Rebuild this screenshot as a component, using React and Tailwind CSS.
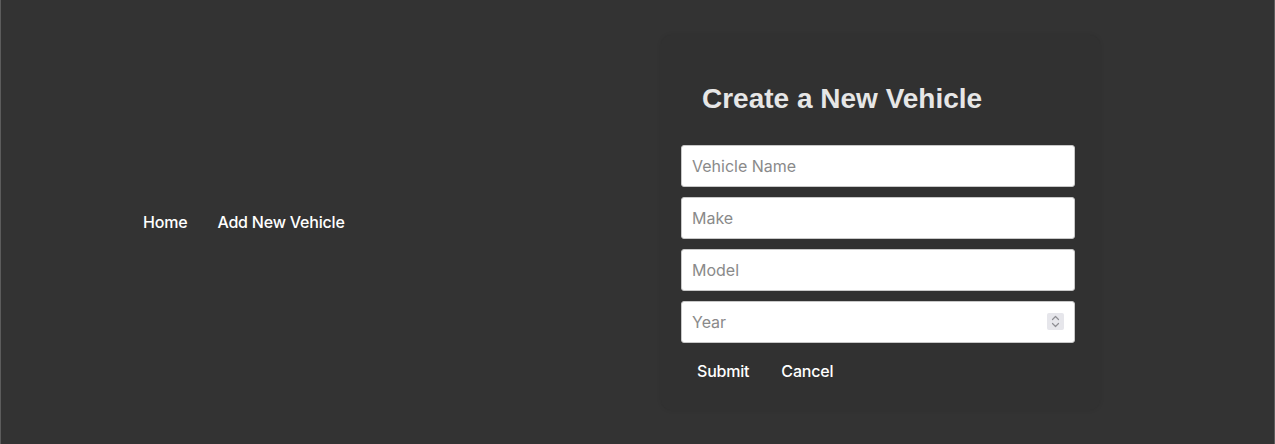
import React from "react";

function Field({ placeholder, spinner }) {
  return (
    <div className="relative">
      <input
        type="text"
        placeholder={placeholder}
        className="w-full h-[42px] rounded-[3px] border border-[#c8c8c8] bg-white pl-[10px] pr-3 text-[16px] text-[#333] placeholder:text-[#8a8a8a] outline-none"
        style={{ fontFamily: "Inter, 'Noto Sans', sans-serif" }}
      />
      {spinner && (
        <div className="absolute right-[11px] top-[12px] w-[17px] h-[17px] bg-[#e6e6eb] rounded-[2px] flex items-center justify-center">
          <svg width="9" height="13" viewBox="0 0 9 13" fill="none" stroke="#8e8e93" strokeWidth="1.2" strokeLinecap="round" strokeLinejoin="round">
            <path d="M1.5 4.5 L4.5 1.5 L7.5 4.5" />
            <path d="M1.5 8.5 L4.5 11.5 L7.5 8.5" />
          </svg>
        </div>
      )}
    </div>
  );
}

export default function App() {
  return (
    <div
      className="h-[444px] w-full bg-[#333333] border-x border-[#5c5c5c] flex items-center text-white"
      style={{ fontFamily: "'Liberation Sans', Arial, sans-serif" }}
    >
      <nav
        className="ml-[126px] flex items-center text-[16px] font-medium tracking-[-0.2px] text-white"
        style={{ fontFamily: "Inter, 'Liberation Sans', sans-serif" }}
      >
        <a className="pl-4 pr-[15px] py-2">Home</a>
        <a className="pl-[15px] pr-4 py-2">Add New Vehicle</a>
      </nav>
      <div className="ml-auto mr-[174px] w-[439px] h-[375px] rounded-[10px] bg-[#313131] shadow-[0_0_4px_rgba(0,0,0,0.1)] px-5 pt-[46px]">
        <h1 className="pl-[21px] text-[28px] font-bold text-[#e6e6e6] leading-[36px]">
          Create a New Vehicle
        </h1>
        <form className="mt-[28px] flex flex-col gap-[10px] w-[394px]">
          <Field placeholder="Vehicle Name" />
          <Field placeholder="Make" />
          <Field placeholder="Model" />
          <Field placeholder="Year" spinner />
        </form>
        <div
          className="mt-[13px] flex items-center text-[16px] font-medium tracking-[-0.2px]"
          style={{ fontFamily: "Inter, 'Liberation Sans', sans-serif" }}
        >
          <button className="px-4 py-[3px] text-white">Submit</button>
          <button className="px-4 py-[3px] text-white">Cancel</button>
        </div>
      </div>
    </div>
  );
}
